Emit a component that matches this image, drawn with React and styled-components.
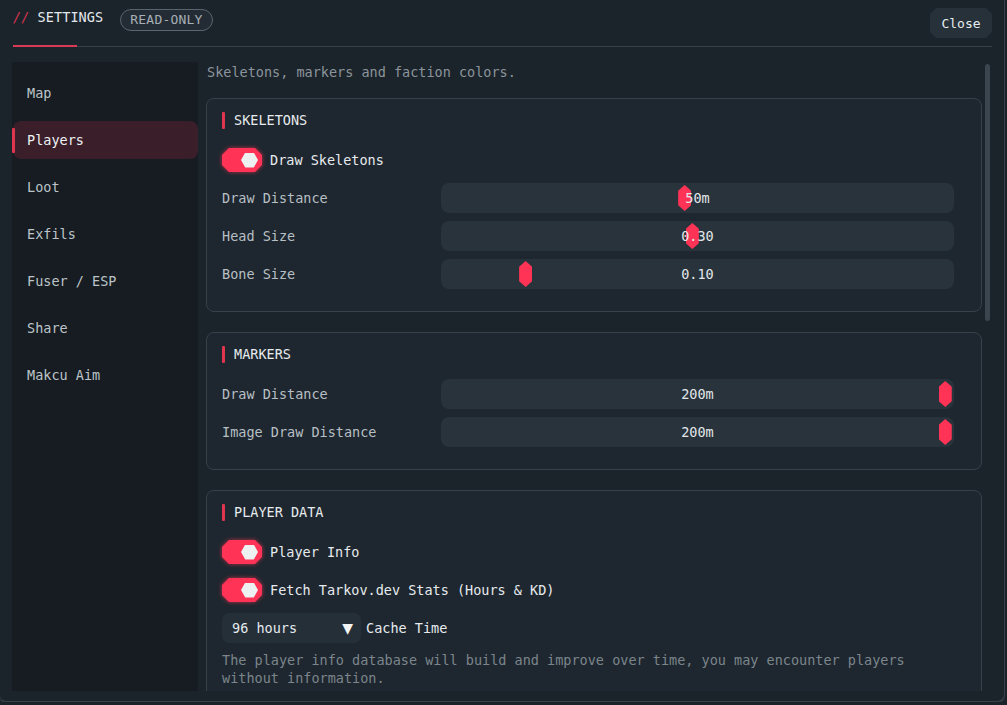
import React from "react";
import styled, { createGlobalStyle } from "styled-components";

const Global = createGlobalStyle`
  html, body { margin: 0; padding: 0; background: #1b222a; overflow: hidden; }
  * { box-sizing: border-box; }
`;

const FONT = `"DejaVu Sans Mono", "Liberation Mono", monospace`;
const RED = "#ff3355";

const Frame = styled.div`
  width: 1005px;
  height: 702px;
  background: #1b232b;
  border-right: 1px solid #39434c;
  border-bottom: 1px solid #39434c;
  border-bottom-right-radius: 8px;
  border-bottom-left-radius: 6px;
  box-shadow: 0 2px 0 #2b343c;
  font-family: ${FONT};
  font-size: 13.5px;
  display: flex;
  flex-direction: column;
  overflow: hidden;
`;

const Header = styled.div`
  display: flex;
  align-items: flex-start;
  padding: 8px 12px 0 13px;
  height: 45px;
`;

const Title = styled.div`
  margin-top: 0;
  color: #e4e9ec;
  letter-spacing: 0.1px;
  display: flex;
  gap: 8px;
  line-height: 18px;
`;

const Slashes = styled.span`
  color: #d9354f;
  font-style: italic;
`;

const Badge = styled.div`
  margin-left: 17px;
  margin-top: 1px;
  height: 22px;
  padding: 0 9px;
  border: 1px solid #5a646c;
  border-radius: 11px;
  background: #232c34;
  color: #a7afb5;
  font-size: 13px;
  line-height: 20px;
  letter-spacing: 0.2px;
`;

const Spacer = styled.div`
  flex: 1;
`;

const CloseButton = styled.button`
  font-family: ${FONT};
  font-size: 13px;
  color: #e7ecee;
  background: #26313a;
  border: none;
  width: 62px;
  height: 30px;
  padding: 0;
  clip-path: polygon(6px 0, calc(100% - 6px) 0, 100% 6px, 100% calc(100% - 6px), calc(100% - 6px) 100%, 6px 100%, 0 calc(100% - 6px), 0 6px);
  border-radius: 4px;
`;

const Divider = styled.div`
  margin: 0 12px 0 13px;
  height: 2px;
  display: flex;
  align-items: flex-end;
  background: linear-gradient(to bottom, transparent 50%, #37414a 50%);
`;

const DividerAccent = styled.div`
  width: 64px;
  height: 2px;
  background: #d93a55;
`;

const Body = styled.div`
  flex: 1;
  display: flex;
  padding: 15px 0 10px 12px;
  min-height: 0;
`;

const Sidebar = styled.nav`
  width: 186px;
  background: #161c21;
  display: flex;
  flex-direction: column;
  gap: 9px;
  padding: 12px 0 0 1px;
`;

const NavItem = styled.div`
  position: relative;
  height: 38px;
  display: flex;
  align-items: center;
  padding-left: 14px;
  border-radius: 8px;
  color: ${(p) => (p.$active ? "#eef1f3" : "#bcc4c9")};
  background: ${(p) => (p.$active ? "#3a1f2a" : "transparent")};
  &::before {
    content: "";
    display: ${(p) => (p.$active ? "block" : "none")};
    position: absolute;
    left: -1px;
    top: 7px;
    width: 3px;
    height: 25px;
    background: #e0354f;
    border-radius: 1px;
  }
`;

const Main = styled.div`
  flex: 1;
  display: flex;
  gap: 3px;
  padding-left: 8px;
  min-height: 0;
`;

const Scroll = styled.div`
  flex: 1;
  overflow: hidden;
  display: flex;
  flex-direction: column;
  gap: 20px;
  padding-top: 1px;
`;

const ScrollTrack = styled.div`
  width: 19px;
  padding-top: 2px;
`;

const ScrollThumb = styled.div`
  width: 5px;
  height: 257px;
  background: #3a454e;
  border-radius: 3px;
`;

const Description = styled.p`
  margin: 0;
  margin-bottom: -3px;
  padding-left: 1px;
  color: #8c959b;
  line-height: 18px;
`;

const Card = styled.section`
  flex-shrink: 0;
  border: 1px solid #36414a;
  border-radius: 8px;
  background: #1e272f;
  padding: 12px 15px 22px;
  display: flex;
  flex-direction: column;
  gap: 8px;
`;

const CardTitle = styled.h3`
  margin: 0 0 8px;
  font-size: 13.5px;
  font-weight: normal;
  color: #e7ebee;
  display: flex;
  align-items: center;
  gap: 9px;
  line-height: 18px;
  &::before {
    content: "";
    width: 3px;
    height: 17px;
    background: #e0354f;
    border-radius: 1px;
  }
`;

const ToggleRow = styled.div`
  height: 30px;
  display: flex;
  align-items: center;
  gap: 8px;
  color: #e7ebee;
`;

const ToggleGlow = styled.span`
  filter: drop-shadow(0 0 2px rgba(255, 51, 85, 0.7));
  display: inline-flex;
`;

const Toggle = styled.span`
  width: 40px;
  height: 24px;
  background: ${RED};
  display: inline-flex;
  align-items: center;
  justify-content: flex-end;
  padding-right: 4px;
  clip-path: polygon(7px 0, calc(100% - 7px) 0, 100% 7px, 100% calc(100% - 7px), calc(100% - 7px) 100%, 7px 100%, 0 calc(100% - 7px), 0 7px);
  border-radius: 6px;
`;

const ToggleKnob = styled.span`
  width: 17px;
  height: 15px;
  background: #eef1f2;
  clip-path: polygon(25% 0, 75% 0, 100% 50%, 75% 100%, 25% 100%, 0 50%);
`;

const SliderRow = styled.div`
  display: grid;
  grid-template-columns: 219px 513px;
  align-items: center;
  height: 30px;
`;

const Label = styled.span`
  color: #b7bfc4;
  line-height: 18px;
`;

const Track = styled.div`
  position: relative;
  height: 30px;
  border-radius: 8px;
  background: #28333c;
  display: flex;
  align-items: center;
  justify-content: center;
  color: #e2e7ea;
`;

const Thumb = styled.span`
  position: absolute;
  top: 2px;
  width: 13px;
  height: 26px;
  margin-left: -6px;
  background: ${RED};
  clip-path: polygon(50% 0, 100% 22%, 100% 78%, 50% 100%, 0 78%, 0 22%);
`;

const Value = styled.span`
  position: relative;
  line-height: 18px;
`;

const SelectRow = styled.div`
  display: flex;
  align-items: center;
  gap: 5px;
  color: #e7ebee;
`;

const Select = styled.div`
  width: 139px;
  height: 30px;
  background: #242f38;
  border-radius: 7px;
  display: flex;
  align-items: center;
  justify-content: space-between;
  padding: 0 8px 0 10px;
  color: #e7ebee;
`;

const Caret = styled.span`
  font-family: "DejaVu Sans", sans-serif;
  font-size: 14px;
  color: #f2f4f5;
`;

const Note = styled.p`
  margin: 0;
  color: #7b858b;
  line-height: 18px;
`;

const navItems = ["Map", "Players", "Loot", "Exfils", "Fuser / ESP", "Share", "Makcu Aim"];

function Slider({ label, value, pos }) {
  return (
    <SliderRow>
      <Label>{label}</Label>
      <Track>
        <Thumb style={{ left: `${pos * 100}%` }} />
        <Value>{value}</Value>
      </Track>
    </SliderRow>
  );
}

function Switch({ label }) {
  return (
    <ToggleRow>
      <ToggleGlow>
        <Toggle>
          <ToggleKnob />
        </Toggle>
      </ToggleGlow>
      {label}
    </ToggleRow>
  );
}

export default function App() {
  return (
    <>
      <Global />
      <Frame>
        <Header>
          <Title>
            <Slashes>//</Slashes>
            <span>SETTINGS</span>
          </Title>
          <Badge>READ-ONLY</Badge>
          <Spacer />
          <CloseButton>Close</CloseButton>
        </Header>
        <Divider>
          <DividerAccent />
        </Divider>
        <Body>
          <Sidebar>
            {navItems.map((n) => (
              <NavItem key={n} $active={n === "Players"}>
                {n}
              </NavItem>
            ))}
          </Sidebar>
          <Main>
            <Scroll>
              <Description>Skeletons, markers and faction colors.</Description>
              <Card>
                <CardTitle>SKELETONS</CardTitle>
                <Switch label="Draw Skeletons" />
                <Slider label="Draw Distance" value="50m" pos={0.474} />
                <Slider label="Head Size" value="0.30" pos={0.489} />
                <Slider label="Bone Size" value="0.10" pos={0.164} />
              </Card>
              <Card>
                <CardTitle>MARKERS</CardTitle>
                <Slider label="Draw Distance" value="200m" pos={0.982} />
                <Slider label="Image Draw Distance" value="200m" pos={0.982} />
              </Card>
              <Card>
                <CardTitle>PLAYER DATA</CardTitle>
                <Switch label="Player Info" />
                <Switch label="Fetch Tarkov.dev Stats (Hours & KD)" />
                <SelectRow>
                  <Select>
                    <span>96 hours</span>
                    <Caret>▼</Caret>
                  </Select>
                  Cache Time
                </SelectRow>
                <Note>
                  The player info database will build and improve over time, you may encounter players
                  <br />
                  without information.
                </Note>
              </Card>
            </Scroll>
            <ScrollTrack>
              <ScrollThumb />
            </ScrollTrack>
          </Main>
        </Body>
      </Frame>
    </>
  );
}
